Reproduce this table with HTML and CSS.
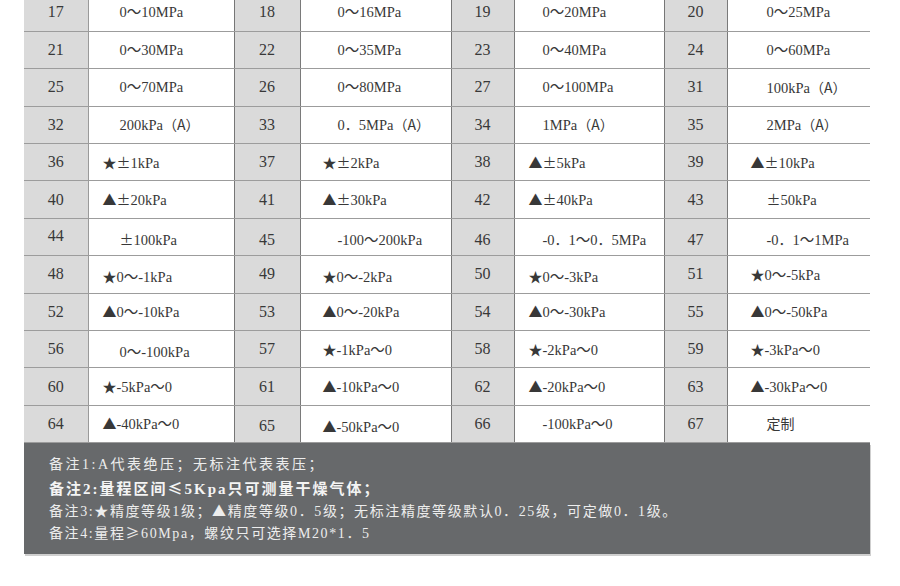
FILE: index.html
```html
<!DOCTYPE html>
<html lang="zh-CN">
<head>
<meta charset="utf-8">
<title>量程表</title>
<link rel="stylesheet" href="styles.css">
</head>
<body>
<div class="wrap">
  <table class="range">
    <colgroup>
      <col class="cn1"><col class="cv1"><col class="cn2"><col class="cv2"><col class="cn3"><col class="cv3"><col class="cn4"><col class="cv4">
    </colgroup>
    <tbody>
      <tr>
        <td class="n n1">17</td><td class="v v1 p">0～10MPa</td>
        <td class="n">18</td><td class="v v2 p">0～16MPa</td>
        <td class="n">19</td><td class="v v3 p">0～20MPa</td>
        <td class="n">20</td><td class="v v4 p">0～25MPa</td>
      </tr>
      <tr>
        <td class="n n1">21</td><td class="v v1 p">0～30MPa</td>
        <td class="n">22</td><td class="v v2 p">0～35MPa</td>
        <td class="n">23</td><td class="v v3 p">0～40MPa</td>
        <td class="n">24</td><td class="v v4 p">0～60MPa</td>
      </tr>
      <tr>
        <td class="n n1">25</td><td class="v v1 p">0～70MPa</td>
        <td class="n">26</td><td class="v v2 p">0～80MPa</td>
        <td class="n">27</td><td class="v v3 p">0～100MPa</td>
        <td class="n">31</td><td class="v v4 p">100kPa<span class="m">（A）</span></td>
      </tr>
      <tr>
        <td class="n n1">32</td><td class="v v1 p">200kPa<span class="m">（A）</span></td>
        <td class="n">33</td><td class="v v2 p">0<span class="m">．</span>5MPa<span class="m">（A）</span></td>
        <td class="n">34</td><td class="v v3 p">1MPa<span class="m">（A）</span></td>
        <td class="n">35</td><td class="v v4 p">2MPa<span class="m">（A）</span></td>
      </tr>
      <tr>
        <td class="n n1">36</td><td class="v v1"><span class="m">★±</span>1kPa</td>
        <td class="n">37</td><td class="v v2"><span class="m">★±</span>2kPa</td>
        <td class="n">38</td><td class="v v3"><span class="m">▲±</span>5kPa</td>
        <td class="n">39</td><td class="v v4"><span class="m">▲±</span>10kPa</td>
      </tr>
      <tr>
        <td class="n n1">40</td><td class="v v1"><span class="m">▲±</span>20kPa</td>
        <td class="n">41</td><td class="v v2"><span class="m">▲±</span>30kPa</td>
        <td class="n">42</td><td class="v v3"><span class="m">▲±</span>40kPa</td>
        <td class="n">43</td><td class="v v4 p"><span class="m">±</span>50kPa</td>
      </tr>
      <tr>
        <td class="n n1 up">44</td><td class="v v1 p dn"><span class="m">±</span>100kPa</td>
        <td class="n dn">45</td><td class="v v2 p dn">-100～200kPa</td>
        <td class="n dn">46</td><td class="v v3 p dn">-0<span class="m">．</span>1～0<span class="m">．</span>5MPa</td>
        <td class="n dn">47</td><td class="v v4 p dn">-0<span class="m">．</span>1～1MPa</td>
      </tr>
      <tr>
        <td class="n n1">48</td><td class="v v1 dn"><span class="m">★</span>0～-1kPa</td>
        <td class="n">49</td><td class="v v2 dn"><span class="m">★</span>0～-2kPa</td>
        <td class="n">50</td><td class="v v3 dn"><span class="m">★</span>0～-3kPa</td>
        <td class="n">51</td><td class="v v4"><span class="m">★</span>0～-5kPa</td>
      </tr>
      <tr>
        <td class="n n1">52</td><td class="v v1"><span class="m">▲</span>0～-10kPa</td>
        <td class="n">53</td><td class="v v2"><span class="m">▲</span>0～-20kPa</td>
        <td class="n">54</td><td class="v v3"><span class="m">▲</span>0～-30kPa</td>
        <td class="n">55</td><td class="v v4"><span class="m">▲</span>0～-50kPa</td>
      </tr>
      <tr>
        <td class="n n1">56</td><td class="v v1 p dn">0～-100kPa</td>
        <td class="n">57</td><td class="v v2"><span class="m">★</span>-1kPa～0</td>
        <td class="n">58</td><td class="v v3"><span class="m">★</span>-2kPa～0</td>
        <td class="n">59</td><td class="v v4"><span class="m">★</span>-3kPa～0</td>
      </tr>
      <tr>
        <td class="n n1">60</td><td class="v v1"><span class="m">★</span>-5kPa～0</td>
        <td class="n">61</td><td class="v v2"><span class="m">▲</span>-10kPa～0</td>
        <td class="n">62</td><td class="v v3"><span class="m">▲</span>-20kPa～0</td>
        <td class="n">63</td><td class="v v4"><span class="m">▲</span>-30kPa～0</td>
      </tr>
      <tr>
        <td class="n n1">64</td><td class="v v1"><span class="m">▲</span>-40kPa～0</td>
        <td class="n dn">65</td><td class="v v2 dn"><span class="m">▲</span>-50kPa～0</td>
        <td class="n">66</td><td class="v v3 p">-100kPa～0</td>
        <td class="n">67</td><td class="v v4 p"><span class="m">定制</span></td>
      </tr>
    </tbody>
  </table>
  <div class="notes">
    <p class="note wide">备注1:A代表绝压；无标注代表表压；</p>
    <p class="note strong">备注2:量程区间<span class="m">≤</span>5Kpa只可测量干燥气体；</p>
    <p class="note">备注3:<span class="m">★</span>精度等级1级；<span class="m">▲</span>精度等级0．5级；无标注精度等级默认0．25级，可定做0．1级。</p>
    <p class="note">备注4:量程<span class="m">≥</span>60Mpa，螺纹只可选择M20*1．5</p>
  </div>
</div>
</body>
</html>
```

FILE: styles.css
```css
html, body {
  margin: 0;
  padding: 0;
  background: #ffffff;
}

body {
  width: 900px;
  height: 586px;
  overflow: hidden;
  font-family: "Liberation Serif", "Noto Sans CJK SC", serif;
}

.wrap {
  padding-left: 24px;
  width: 846px;
}

.range {
  margin-top: -6px;
  width: 846px;
  border-collapse: collapse;
  table-layout: fixed;
}

.cn1 { width: 64px; }
.cv1 { width: 146px; }
.cn2 { width: 66px; }
.cv2 { width: 151px; }
.cn3 { width: 63px; }
.cv3 { width: 150px; }
.cn4 { width: 63px; }
.cv4 { width: 143px; }

.range tr {
  height: 37.4px;
}

.range td {
  padding: 0;
  border-bottom: 1px solid #9c9c9c;
  white-space: nowrap;
  overflow: hidden;
  vertical-align: middle;
  line-height: 20px;
  color: #383838;
}

.n {
  background: #dadada;
  text-align: center;
  font-size: 16px;
  border-left: 1px solid #767676;
  border-right: 1px solid #7a7a7a;
}

.n1 {
  border-left: none;
  border-right: 1px solid #9a9a9a;
}

.v {
  background: #ffffff;
  text-align: left;
  font-size: 14.5px;
}

.m {
  font-family: "Noto Sans CJK SC", sans-serif;
}

.v .m {
  font-size: 14px;
}

.v1 { padding-left: 14px !important; }
.v2 { padding-left: 22px !important; }
.v3 { padding-left: 14px !important; }
.v4 { padding-left: 23px !important; }

.v1.p { padding-left: 31px !important; }
.v2.p { padding-left: 37px !important; }
.v3.p { padding-left: 28px !important; }
.v4.p { padding-left: 39px !important; }

.dn { padding-top: 5px !important; }
.up { padding-bottom: 3px !important; }

.notes {
  width: 821px;
  background: #67696b;
  padding: 10px 0 11px 25px;
  box-shadow: 1px 2px 0 #cfcfcf;
  color: #ededed;
}

.note {
  margin: 0;
  height: 23px;
  line-height: 23px;
  font-size: 14px;
  letter-spacing: 1.6px;
  white-space: nowrap;
  font-family: "Liberation Serif", "Noto Sans CJK SC", serif;
}

.note:last-child {
  height: 21px;
  line-height: 21px;
}

.wide {
  letter-spacing: 2.5px;
}

.strong {
  font-size: 15px;
  font-weight: bold;
  letter-spacing: 2px;
  color: #f4f4f4;
}
```
